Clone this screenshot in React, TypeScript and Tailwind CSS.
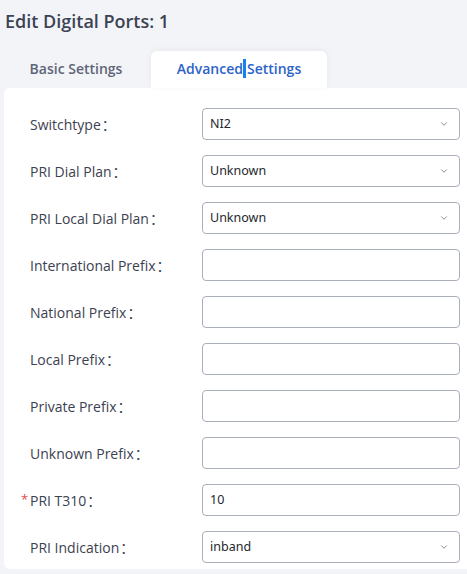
import { ChevronDown } from 'lucide-react';

type Field = {
  label: string;
  kind: 'select' | 'input';
  value?: string;
  required?: boolean;
};

const fields: Field[] = [
  { label: 'Switchtype', kind: 'select', value: 'NI2' },
  { label: 'PRI Dial Plan', kind: 'select', value: 'Unknown' },
  { label: 'PRI Local Dial Plan', kind: 'select', value: 'Unknown' },
  { label: 'International Prefix', kind: 'input' },
  { label: 'National Prefix', kind: 'input' },
  { label: 'Local Prefix', kind: 'input' },
  { label: 'Private Prefix', kind: 'input' },
  { label: 'Unknown Prefix', kind: 'input' },
  { label: 'PRI T310', kind: 'input', value: '10', required: true },
  { label: 'PRI Indication', kind: 'select', value: 'inband' },
];

function FieldRow({ field }: { field: Field }) {
  return (
    <div className="flex items-center h-[32px]">
      <div className="w-[172px] flex items-center text-[14px] text-[#3c4150]">
        {field.required && (
          <span className="-ml-[9px] w-[9px] text-[#e5484d] text-[13px]">*</span>
        )}
        <span>
          {field.label}
          <span className="font-['Noto_Sans_CJK_SC'] ml-[1px]">：</span>
        </span>
      </div>
      <div className="w-[258px] h-[32px] border border-[#aab0bb] rounded-[4px] bg-white flex items-center pl-[7px] pr-[10px] font-['Noto_Sans',sans-serif] text-[12.5px] text-[#25282e]">
        <span className="flex-1">{field.value ?? ''}</span>
        {field.kind === 'select' && (
          <ChevronDown size={10} strokeWidth={1.6} className="text-[#4b5160]" />
        )}
      </div>
    </div>
  );
}

export default function App() {
  return (
    <div className="w-[467px] h-[574px] bg-[#f3f4f7] overflow-hidden font-['Open_Sans',sans-serif]">
      <h1 className="pl-[5px] pt-[9px] text-[18px] leading-[24px] font-semibold text-[#3b4354]">
        Edit Digital Ports: 1
      </h1>

      <div className="flex mt-[18px] h-[37px]">
        <button className="ml-[14px] w-[124px] text-[14px] font-semibold text-[#5d6577] pb-[2px]">
          Basic Settings
        </button>
        <button className="ml-[13px] w-[176px] bg-white rounded-t-[6px] shadow-[0_-1px_6px_rgba(0,0,0,0.05)] text-[14px] font-semibold text-[#2b63c8] flex items-center justify-center pb-[2px]">
          Advanced
          <span className="inline-block w-[3px] h-[19px] bg-[#1682ea] mx-[0.5px]" />
          Settings
        </button>
      </div>

      <div className="ml-[4px] w-[475px] bg-white rounded-[6px] pt-[20px] pb-[6px] pl-[26px] flex flex-col gap-[15px]">
        {fields.map(f => (
          <FieldRow key={f.label} field={f} />
        ))}
      </div>
    </div>
  );
}
